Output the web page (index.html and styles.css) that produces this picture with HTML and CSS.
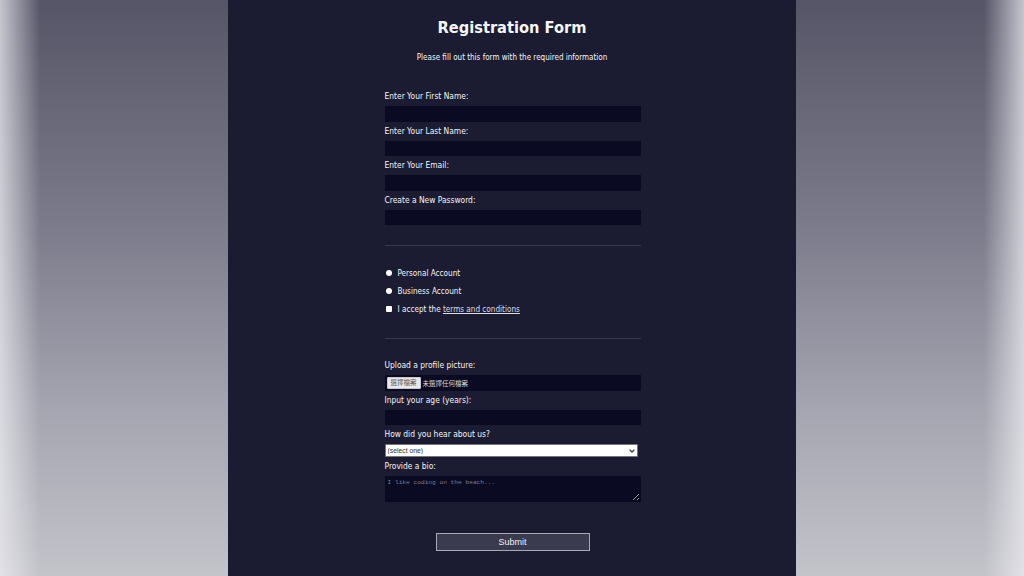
FILE: index.html
```html
<!DOCTYPE html>
<html lang="en">
<head>
<meta charset="utf-8">
<title>Registration Form</title>
<link rel="stylesheet" href="styles.css">
</head>
<body>
<main class="page">
  <h1 class="title">Registration Form</h1>
  <p class="subtitle">Please fill out this form with the required information</p>
  <form class="form" action="#">
    <fieldset class="group">
      <label class="field">Enter Your First Name: <input class="text-input" type="text"></label>
      <label class="field">Enter Your Last Name: <input class="text-input" type="text"></label>
      <label class="field">Enter Your Email: <input class="text-input" type="email"></label>
      <label class="field">Create a New Password: <input class="text-input" type="password"></label>
    </fieldset>
    <fieldset class="group middle">
      <label class="field check-row"><input class="radio" type="radio" name="account">Personal Account</label>
      <label class="field check-row"><input class="radio" type="radio" name="account">Business Account</label>
      <label class="field check-row"><input class="checkbox" type="checkbox">I accept the&nbsp;<a class="terms" href="#">terms and conditions</a></label>
    </fieldset>
    <fieldset class="group last">
      <label class="field">Upload a profile picture:
        <span class="file-input"><span class="file-btn">選擇檔案</span><span class="file-text">未選擇任何檔案</span></span>
      </label>
      <label class="field">Input your age (years): <input class="text-input" type="number"></label>
      <label class="field">How did you hear about us?
        <span class="select-wrap">
          <select class="select">
            <option>(select one)</option>
            <option>freeCodeCamp News</option>
            <option>freeCodeCamp YouTube Channel</option>
            <option>freeCodeCamp Forum</option>
            <option>Other</option>
          </select>
          <svg class="chev" width="6" height="4" viewBox="0 0 6 4"><path d="M0.6 0.6 L3 3 L5.4 0.6" fill="none" stroke="#333" stroke-width="1.3"/></svg>
        </span>
      </label>
      <label class="field">Provide a bio:
        <textarea class="bio" rows="3" placeholder="I like coding on the beach..."></textarea>
      </label>
    </fieldset>
    <input class="submit" type="submit" value="Submit">
  </form>
</main>
</body>
</html>
```
FILE: styles.css
```css
html, body {
  margin: 0;
  padding: 0;
}
body {
  min-height: 576px;
  background:
    linear-gradient(to right, rgba(235,235,240,0.75) 0px, rgba(235,235,240,0) 40px, rgba(235,235,240,0) calc(100% - 40px), rgba(235,235,240,0.75) 100%),
    linear-gradient(to bottom, #555567 0%, #7c7c8c 40%, #a4a4b0 70%, #c3c3ca 100%);
  font-family: "DejaVu Sans", Tahoma, sans-serif;
  font-stretch: condensed;
}
.page {
  width: 568px;
  min-height: 576px;
  margin: 0 auto;
  background: #1b1b32;
  color: #f5f6f7;
  padding-top: 17px;
  box-sizing: border-box;
}
.title {
  margin: 0;
  text-align: center;
  font-size: 16.3px;
  line-height: 22px;
  font-weight: bold;
}
.subtitle {
  margin: 14px 0 0;
  text-align: center;
  font-size: 8px;
  line-height: 10px;
}
.form {
  width: 256px;
  margin: 0 auto;
  padding-left: 1px;
}
.group {
  margin: 0;
  padding: 15px 0 16px;
  border: none;
  border-bottom: 1.5px solid #3b3b4f;
}
.group:first-child {
  padding-top: 24px;
}
.group.middle {
  padding: 16px 0 18px;
}
.group.last {
  padding-top: 17px;
  border-bottom: none;
}
.field {
  display: block;
  margin: 4px 0;
  font-size: 8.4px;
  line-height: 10px;
}
.text-input {
  display: block;
  box-sizing: border-box;
  width: 100%;
  height: 15.5px;
  margin: 5px 0 0;
  background: #0a0a23;
  border: 1px solid #0a0a23;
  color: #fff;
  padding: 0 2px;
  font-size: 8px;
}
.check-row {
  display: flex;
  align-items: center;
  height: 14px;
  font-size: 8.1px;
}
.radio, .checkbox {
  appearance: none;
  -webkit-appearance: none;
  width: 6px;
  height: 6px;
  margin: 0 6px 0 1px;
  background: #fff;
  border: none;
  flex: none;
}
.radio {
  border-radius: 50%;
}
.checkbox {
  border-radius: 1px;
}
.terms {
  color: #dfdfe2;
}
.file-input {
  display: flex;
  align-items: center;
  box-sizing: border-box;
  height: 15.5px;
  margin-top: 5px;
  background: #0a0a23;
  padding: 0 2px;
  font-family: "Noto Sans CJK TC", sans-serif;
  font-size: 6.5px;
}
.file-btn {
  background: #e9e9ed;
  color: #555;
  border: 1px solid #c8c8cc;
  border-radius: 1px;
  padding: 0 3px;
  line-height: 9.5px;
  margin-right: 2px;
}
.file-text {
  color: #ddd;
}
.select-wrap {
  position: relative;
  display: block;
  margin-top: 5px;
  width: 253px;
}
.select {
  appearance: none;
  -webkit-appearance: none;
  display: block;
  width: 100%;
  box-sizing: border-box;
  height: 13px;
  margin: 0;
  padding: 0 2px;
  background: #fff;
  color: #333;
  border: 1px solid #767676;
  border-radius: 1px;
  font-family: "Liberation Sans", Arial, sans-serif;
  font-size: 6.8px;
}
.chev {
  position: absolute;
  right: 3px;
  top: 5px;
}
.bio {
  display: block;
  box-sizing: border-box;
  width: 100%;
  height: 25.5px;
  margin: 5px 0 0;
  padding: 2px;
  background: #0a0a23;
  border: 1px solid #0a0a23;
  color: #fff;
  resize: vertical;
  font-family: "Liberation Mono", monospace;
  font-size: 6.2px;
}
.bio::placeholder {
  color: #7d7d8b;
}
.submit {
  display: block;
  box-sizing: border-box;
  width: 154px;
  height: 18px;
  margin: 11px auto 0;
  background: #3b3b4f;
  border: 1px solid #a9a9b5;
  color: #f0f0f2;
  font-family: "Liberation Sans", Arial, sans-serif;
  font-size: 9px;
  padding: 0;
}
```
